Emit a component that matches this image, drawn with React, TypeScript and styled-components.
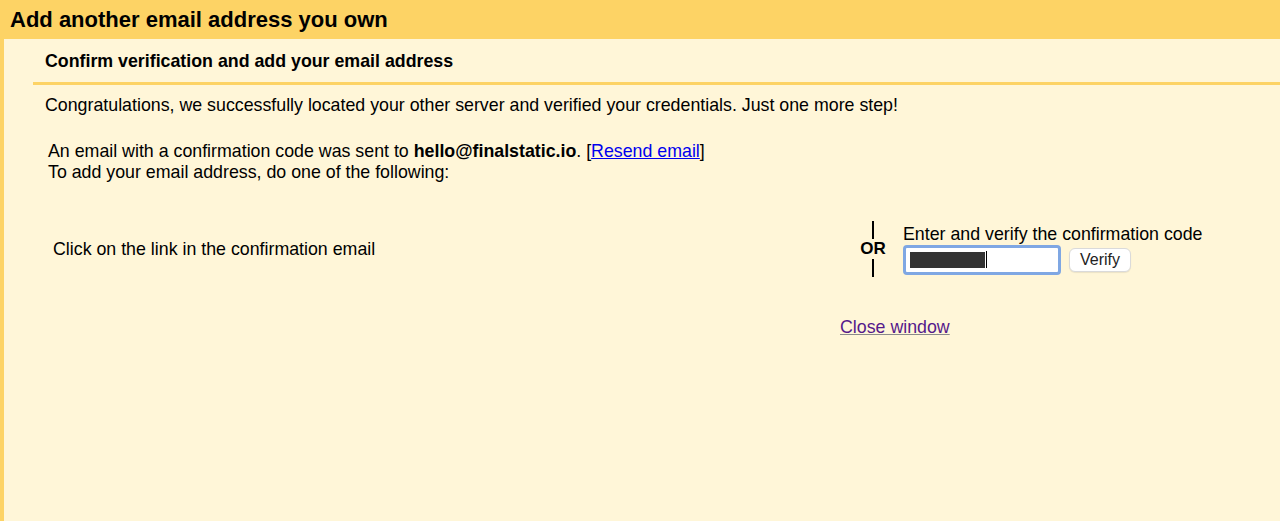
import React from 'react'
import styled, { createGlobalStyle } from 'styled-components'

const yellow = '#fdd365'
const cream = '#fff6d8'

const GlobalStyle = createGlobalStyle`
  html, body {
    margin: 0;
    padding: 0;
    background: ${cream};
  }
  body {
    font-family: "Liberation Sans", Arial, Helvetica, sans-serif;
    color: #000;
  }
`

const Page = styled.div`
  width: 1280px;
  height: 521px;
  display: flex;
  flex-direction: column;
  overflow: hidden;
`

const TitleBar = styled.header`
  height: 39px;
  background: ${yellow};
  display: flex;
  align-items: center;
  padding-left: 10px;
  box-sizing: border-box;
`

const Title = styled.h1`
  margin: 0;
  font-size: 22px;
  font-weight: bold;
`

const Body = styled.main`
  flex: 1;
  border-left: 4px solid ${yellow};
  padding-left: 29px;
`

const SectionHead = styled.div`
  height: 41px;
  border-bottom: 3px solid ${yellow};
  display: flex;
  align-items: center;
  padding: 2px 0 0 12px;
  font-size: 17.8px;
  font-weight: bold;
`

const Content = styled.div`
  padding-left: 12px;
  font-size: 17.8px;
  line-height: 21px;
`

const Lead = styled.p`
  margin: 10px 0 0;
`

const Notice = styled.p`
  margin: 25px 0 0 3px;
`

const Resend = styled.a`
  color: #0000ee;
  text-decoration: underline;
`

const Choices = styled.div`
  display: flex;
  align-items: center;
  margin-top: 38px;
  margin-left: 8px;
`

const LinkOption = styled.div`
  flex: 0 0 807px;
`

const Or = styled.div`
  width: 26px;
  display: flex;
  flex-direction: column;
  align-items: center;
  font-weight: bold;
  font-size: 17px;
  line-height: 20px;
`

const Rule = styled.span`
  width: 2px;
  height: 18px;
  background: #000;
`

const CodeOption = styled.div`
  margin-left: 17px;
  display: flex;
  flex-direction: column;
`

const CodeRow = styled.div`
  display: flex;
  align-items: center;
  gap: 8px;
`

const CodeInput = styled.div`
  width: 158px;
  height: 30px;
  box-sizing: border-box;
  border: 3px solid #7fa7e3;
  border-radius: 4px;
  background: #fff;
  display: flex;
  align-items: center;
  padding-left: 4px;
`

const Masked = styled.span`
  width: 75px;
  height: 16px;
  background: #333;
`

const Caret = styled.span`
  width: 1px;
  height: 17px;
  background: #000;
  margin-left: 1px;
`

const VerifyButton = styled.button`
  height: 24px;
  width: 62px;
  padding: 0;
  border: 1px solid #dadada;
  border-radius: 6px;
  background: #fff;
  font-family: "Liberation Sans", Arial, sans-serif;
  font-size: 16px;
  color: #222;
  box-shadow: 0 1px 1px rgba(0, 0, 0, 0.08);
`

const CloseLink = styled.a`
  display: block;
  margin: 40px 0 0 795px;
  width: max-content;
  color: #551a8b;
  text-decoration: underline;
  text-decoration-color: #8a8a8a;
`

export default function App() {
  return (
    <Page>
      <GlobalStyle />
      <TitleBar>
        <Title>Add another email address you own</Title>
      </TitleBar>
      <Body>
        <SectionHead>Confirm verification and add your email address</SectionHead>
        <Content>
          <Lead>
            Congratulations, we successfully located your other server and verified your credentials. Just one more step!
          </Lead>
          <Notice>
            An email with a confirmation code was sent to <b>hello@finalstatic.io</b>. [<Resend href="#">Resend email</Resend>]
            <br />
            To add your email address, do one of the following:
          </Notice>
          <Choices>
            <LinkOption>Click on the link in the confirmation email</LinkOption>
            <Or>
              <Rule />
              OR
              <Rule />
            </Or>
            <CodeOption>
              <span>Enter and verify the confirmation code</span>
              <CodeRow>
                <CodeInput>
                  <Masked />
                  <Caret />
                </CodeInput>
                <VerifyButton>Verify</VerifyButton>
              </CodeRow>
            </CodeOption>
          </Choices>
          <CloseLink href="#">Close window</CloseLink>
        </Content>
      </Body>
    </Page>
  )
}
